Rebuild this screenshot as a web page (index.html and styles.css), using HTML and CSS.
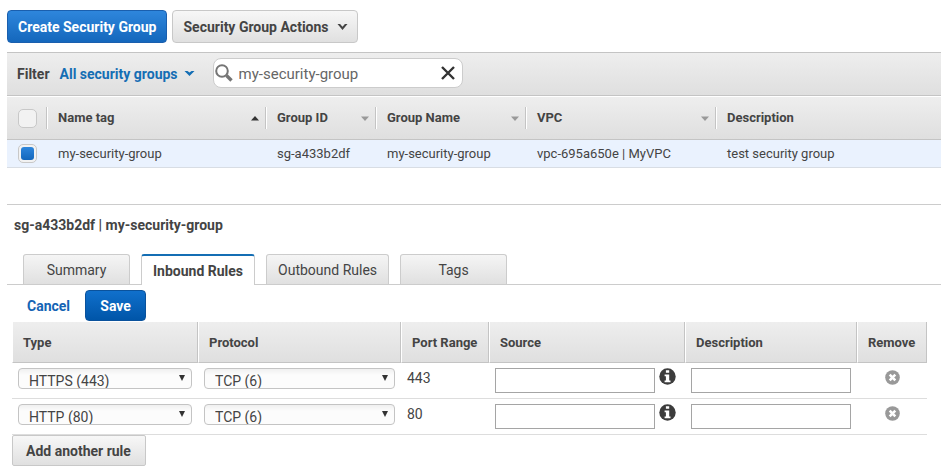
FILE: index.html
```html
<!DOCTYPE html>
<html lang="en">
<head>
<meta charset="utf-8">
<title>Security Groups</title>
<link rel="stylesheet" href="styles.css">
</head>
<body>
<main class="page">
  <div class="toolbar">
    <button type="button" class="btn btn-primary">Create Security Group</button>
    <button type="button" class="btn btn-menu">Security Group Actions
      <svg class="chevron" width="11" height="8" viewBox="0 0 11 8" aria-hidden="true"><path d="M.5 1h2.600l2.400 2.800L7.900 1h2.600L5.500 7z" fill="currentColor"/></svg>
    </button>
  </div>

  <div class="filter-bar">
    <span class="filter-label">Filter</span>
    <button type="button" class="filter-select">All security groups
      <svg class="chevron" width="11" height="8" viewBox="0 0 11 8" aria-hidden="true"><path d="M.5 1h3l2 1.600L7.500 1h3L5.500 6z" fill="currentColor"/></svg>
    </button>
    <div class="search">
      <svg width="18" height="19" viewBox="0 0 18 19" aria-hidden="true"><circle cx="7" cy="7" r="5.8" fill="none" stroke="#757575" stroke-width="2"/><path d="M11.500 11.500l5 5" stroke="#757575" stroke-width="3.4"/></svg>
      <input type="text" class="search-input" value="my-security-group" aria-label="Search security groups">
      <button type="button" class="search-clear" aria-label="Clear search">
        <svg width="14" height="14" viewBox="0 0 14 14" aria-hidden="true"><path d="M1 1l12 12M13 1L1 13" stroke="#333" stroke-width="2.4"/></svg>
      </button>
    </div>
  </div>

  <table class="groups">
    <colgroup><col class="g-check"><col class="g-name"><col class="g-id"><col class="g-group"><col class="g-vpc"><col></colgroup>
    <thead>
      <tr>
        <th><div class="head-cell"><input type="checkbox" class="check" aria-label="Select all"></div></th>
        <th><div class="head-cell">Name tag<svg width="8" height="5" viewBox="0 0 8 5" aria-hidden="true"><path d="M0 4.500h8L4 0z" fill="#333"/></svg></div></th>
        <th><div class="head-cell">Group ID<svg width="8" height="5" viewBox="0 0 8 5" aria-hidden="true"><path d="M0 .5h8L4 5z" fill="#999"/></svg></div></th>
        <th><div class="head-cell">Group Name<svg width="8" height="5" viewBox="0 0 8 5" aria-hidden="true"><path d="M0 .5h8L4 5z" fill="#999"/></svg></div></th>
        <th><div class="head-cell">VPC<svg width="8" height="5" viewBox="0 0 8 5" aria-hidden="true"><path d="M0 .5h8L4 5z" fill="#999"/></svg></div></th>
        <th><div class="head-cell head-last">Description</div></th>
      </tr>
    </thead>
    <tbody>
      <tr>
        <td><input type="checkbox" class="check" checked aria-label="Select my-security-group"></td>
        <td>my-security-group</td>
        <td>sg-a433b2df</td>
        <td>my-security-group</td>
        <td>vpc-695a650e | MyVPC</td>
        <td>test security group</td>
      </tr>
    </tbody>
  </table>

  <section class="details">
    <h1 class="details-title">sg-a433b2df | my-security-group</h1>
    <div class="tabs" role="tablist">
      <button type="button" role="tab" class="tab">Summary</button>
      <button type="button" role="tab" class="tab tab-active" aria-selected="true">Inbound Rules</button>
      <button type="button" role="tab" class="tab">Outbound Rules</button>
      <button type="button" role="tab" class="tab">Tags</button>
    </div>

    <div class="panel">
      <div class="edit-actions">
        <a href="#" class="cancel">Cancel</a>
        <button type="button" class="btn btn-save">Save</button>
      </div>

      <table class="rules">
        <colgroup><col class="r-type"><col class="r-protocol"><col class="r-port"><col class="r-source"><col class="r-desc"><col class="r-remove"></colgroup>
        <thead>
          <tr><th>Type</th><th>Protocol</th><th>Port Range</th><th>Source</th><th>Description</th><th>Remove</th></tr>
        </thead>
        <tbody>
          <tr>
            <td><div class="select"><select aria-label="Type"><option>HTTPS (443)</option></select></div></td>
            <td><div class="select"><select aria-label="Protocol"><option>TCP (6)</option></select></div></td>
            <td>443</td>
            <td><div class="source"><input type="text" class="field" aria-label="Source"><svg width="17" height="17" viewBox="0 0 17 17" aria-hidden="true"><circle cx="8.5" cy="8.5" r="8.2" fill="#3c3c3c"/><path d="M6.900 2.200h3.300v2.600H6.900zM5.600 6.400h4.600v6h1.300v1.800H5.600v-1.800h1.300V8.200H5.600z" fill="#fff"/></svg></div></td>
            <td><input type="text" class="field" aria-label="Description"></td>
            <td><button type="button" class="remove" aria-label="Remove rule"><svg width="15" height="15" viewBox="0 0 15 15" aria-hidden="true"><circle cx="7.5" cy="7.5" r="7.3" fill="#999"/><path d="M4.700 4.700l5.600 5.600M10.300 4.700l-5.600 5.600" stroke="#fff" stroke-width="2.6"/></svg></button></td>
          </tr>
          <tr>
            <td><div class="select"><select aria-label="Type"><option>HTTP (80)</option></select></div></td>
            <td><div class="select"><select aria-label="Protocol"><option>TCP (6)</option></select></div></td>
            <td>80</td>
            <td><div class="source"><input type="text" class="field" aria-label="Source"><svg width="17" height="17" viewBox="0 0 17 17" aria-hidden="true"><circle cx="8.5" cy="8.5" r="8.2" fill="#3c3c3c"/><path d="M6.900 2.200h3.300v2.600H6.900zM5.600 6.400h4.600v6h1.300v1.800H5.600v-1.800h1.300V8.200H5.600z" fill="#fff"/></svg></div></td>
            <td><input type="text" class="field" aria-label="Description"></td>
            <td><button type="button" class="remove" aria-label="Remove rule"><svg width="15" height="15" viewBox="0 0 15 15" aria-hidden="true"><circle cx="7.5" cy="7.5" r="7.3" fill="#999"/><path d="M4.700 4.700l5.600 5.600M10.300 4.700l-5.600 5.600" stroke="#fff" stroke-width="2.6"/></svg></button></td>
          </tr>
        </tbody>
      </table>
      <button type="button" class="btn btn-add">Add another rule</button>
    </div>
  </section>
</main>
</body>
</html>
```
FILE: styles.css
```css
* { box-sizing: border-box; }

body {
  margin: 0;
  background: #fff;
  color: #444;
  font-family: Roboto, "Liberation Sans", sans-serif;
  font-size: 14px;
  line-height: 20px;
}

button, input, select { font: inherit; color: inherit; margin: 0; }
button { cursor: pointer; }
svg { display: block; flex: none; }

.page { padding: 10px 0 0 7px; }

.toolbar { display: flex; gap: 5px; margin-bottom: 9px; }

.btn {
  display: flex;
  align-items: center;
  justify-content: center;
  height: 33px;
  padding: 0 10px;
  border: 1px solid #c8c8c8;
  border-radius: 4px;
  background: linear-gradient(#f7f7f7, #e0e0e0);
  font-weight: 700;
  white-space: nowrap;
}

.btn-primary {
  border-color: #1a5fae;
  background: linear-gradient(#2e86dc, #1467bc);
  color: #fff;
}

.btn-menu { gap: 8px; padding-right: 9px; }

.filter-bar {
  display: flex;
  align-items: center;
  height: 44px;
  padding: 0 10px;
  border-top: 1px solid #c4c4c4;
  border-bottom: 1px solid #c4c4c4;
  background: linear-gradient(#eee, #dfdfdf);
}

.filter-label { margin-right: 10px; font-weight: 700; }

.filter-select {
  display: flex;
  align-items: center;
  gap: 6px;
  padding: 0;
  border: 0;
  background: none;
  color: #146eb4;
  font-weight: 700;
}

.search {
  display: flex;
  align-items: center;
  width: 250px;
  height: 30px;
  margin: 0 0 2px 18px;
  padding: 0 7px 0 1px;
  border: 1px solid #ccc;
  border-radius: 8px;
  background: #fff;
}

.search-input {
  flex: 1;
  min-width: 0;
  height: 28px;
  padding: 2px 0 0 6px;
  border: 0;
  outline: 0;
  background: none;
  color: #666;
  font-size: 15px;
}

.search-clear { padding: 0; border: 0; background: none; }

.groups, .rules { width: 100%; border-spacing: 0; table-layout: fixed; }
.groups { font-size: 13px; }
.g-check { width: 41px; }
.g-name { width: 219px; }
.g-id { width: 110px; }
.g-group { width: 150px; }
.g-vpc { width: 190px; }

.groups th {
  height: 44px;
  padding: 0;
  border-top: 1px solid #fff;
  border-bottom: 1px solid #c4c4c4;
  background: linear-gradient(#eee, #dfdfdf);
  font-weight: 700;
  text-align: left;
}

.head-cell {
  display: flex;
  align-items: center;
  justify-content: space-between;
  height: 22px;
  margin-right: 1px;
  padding: 0 6px 0 10px;
  border-right: 1px solid #c4c4c4;
  box-shadow: 1px 0 #fff;
}

.head-last { border: 0; box-shadow: none; }

.groups td {
  height: 28px;
  padding: 0 10px;
  border-bottom: 1px solid #d8dde4;
  background: #eaf2fe;
}

.groups th:first-child .head-cell,
.groups td:first-child { padding-left: 11px; }

.check {
  display: block;
  appearance: none;
  width: 19px;
  height: 19px;
  border: 1px solid #c8c8c8;
  border-radius: 5px;
  background: #f2f2f2;
}

.check:checked { padding: 2px; }

.check:checked::before {
  content: "";
  display: block;
  width: 13px;
  height: 13px;
  border-radius: 3px;
  background: linear-gradient(#2e86dc, #1467bc);
}

.details {
  margin-top: 36px;
  padding-top: 10px;
  border-top: 1px solid #ccc;
}

.details-title {
  margin: 0 7px 19px;
  font-size: 14px;
  font-weight: 700;
}

.tabs {
  display: flex;
  gap: 11px;
  padding-left: 16px;
  border-bottom: 1px solid #ccc;
}

.tab {
  min-width: 107px;
  height: 30px;
  padding: 0 11px;
  border: 1px solid #ccc;
  border-bottom: 0;
  border-radius: 3px 3px 0 0;
  background: linear-gradient(#f5f5f5, #e0e0e0);
}

.tab-active {
  height: 31px;
  margin-bottom: -1px;
  border-top: 2px solid #146eb4;
  background: #fff;
  font-weight: 700;
}

.panel { padding: 5px 14px 0 5px; }

.edit-actions {
  display: flex;
  align-items: center;
  gap: 15px;
  padding-left: 15px;
}

.cancel { color: #1464b4; font-weight: 700; text-decoration: none; }

.btn-save {
  width: 61px;
  height: 31px;
  border-color: #0a529c;
  background: linear-gradient(#1070cc, #0055a8);
  color: #fff;
}

.rules { margin-top: 1px; }
.r-type { width: 186px; }
.r-protocol { width: 203px; }
.r-port { width: 88px; }
.r-source { width: 196px; }
.r-desc { width: 172px; }
.r-remove { width: 70px; }

.rules th {
  height: 41px;
  padding: 1px 0 0 10px;
  border-right: 1px solid #c4c4c4;
  border-left: 1px solid #fff;
  border-bottom: 1px solid #c4c4c4;
  background: linear-gradient(#eee, #dfdfdf);
  font-size: 13px;
  font-weight: 700;
  text-align: left;
}

.rules td {
  height: 36px;
  padding: 5px 6px 4px;
  border-bottom: 1px solid #ddd;
  vertical-align: top;
}

.select { position: relative; }

.select select {
  display: block;
  appearance: none;
  width: 100%;
  height: 21px;
  padding: 4px 20px 0 10px;
  border: 1px solid #c4c4c4;
  border-radius: 4px;
  background: linear-gradient(#f0f0f0, #fcfcfc 6px);
  line-height: 16px;
}

.select::after {
  content: "";
  position: absolute;
  top: 7px;
  right: 7px;
  border-top: 6px solid #333;
  border-right: 3px solid transparent;
  border-left: 3px solid transparent;
  pointer-events: none;
}

.source { display: flex; align-items: flex-start; gap: 4px; }

.field {
  display: block;
  flex: none;
  width: 160px;
  height: 25px;
  padding: 0 4px;
  border: 1px solid #a5a5a5;
  background: #fff;
}

.remove {
  display: block;
  margin: 2px auto 0;
  padding: 0;
  border: 0;
  background: none;
}

.btn-add { height: 31px; padding: 0 14px 0 13px; border-radius: 2px; }
```
